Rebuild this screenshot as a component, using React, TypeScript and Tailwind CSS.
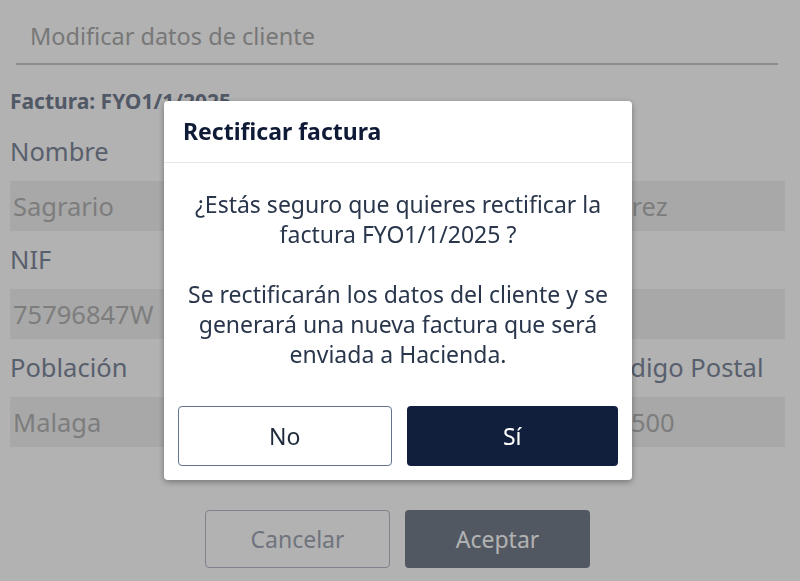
import React from 'react';

const font = "font-['Noto_Sans','Open_Sans',sans-serif]";

function Label({ children }: { children: React.ReactNode }) {
  return <label className="h-8 mb-[14px] text-[25.5px] leading-8 text-[#7f899c] whitespace-nowrap">{children}</label>;
}

function Input({ value }: { value: string }) {
  return (
    <div className="h-[50px] bg-[#f1f1f1] px-[3px] text-[25.5px] leading-[50px] text-[#b4b4b4] whitespace-nowrap overflow-hidden">
      {value}
    </div>
  );
}

function Field({ label, value, span }: { label: string; value: string; span: string }) {
  return (
    <div className={`flex flex-col ${span}`}>
      <Label>{label}</Label>
      <Input value={value} />
    </div>
  );
}

export default function App() {
  return (
    <div className={`relative min-h-screen bg-white ${font}`}>
      {/* Underlying form */}
      <div className="ml-4 mr-[22px] border-b-2 border-[#cbcbcb] pl-[14px] pt-5 pb-[11px] text-[23.5px] leading-8 text-[#acacac]">
        Modificar datos de cliente
      </div>

      <div className="pl-[10px] pr-[15px]">
        <div className="mt-[24px] text-[21px] leading-6 font-bold text-[#747e92]">Factura: FYO1/1/2025</div>

        <div className="mt-[22px] grid grid-cols-4 gap-x-[10px] gap-y-3">
          <Field label="Nombre" value="Sagrario" span="col-span-2" />
          <div className="col-span-2 flex flex-col">
            <Label>Apellidos</Label>
            <div className="grid grid-cols-2 gap-x-[10px]">
              <Input value="García" />
              <Input value="Pérez" />
            </div>
          </div>
          <Field label="NIF" value="75796847W" span="col-span-1" />
          <Field label="Dirección" value="" span="col-span-3" />
          <Field label="Población" value="Malaga" span="col-span-3" />
          <Field label="Código Postal" value="29500" span="col-span-1" />
        </div>

        <div className="mt-[63px] flex justify-center gap-[15px]">
          <button className="h-[58px] w-[185px] rounded-[4px] border border-[#b5bbc7] text-[23px] text-[#a0a7b5]">
            Cancelar
          </button>
          <button className="h-[58px] w-[185px] rounded-[4px] bg-[#757e8d] text-[23px] text-white">
            Aceptar
          </button>
        </div>
      </div>

      {/* Dialog */}
      <div className="fixed inset-0 flex items-center justify-center pr-1 bg-black/30">
        <div className="w-[468px] rounded-[4px] bg-white shadow-[0_2px_6px_rgba(0,0,0,0.35)]">
          <div className="h-[62px] border-b border-[#e5e7eb] px-[19px] flex items-center text-[23px] font-bold text-[#0f1b36]">
            Rectificar factura
          </div>
          <div className="px-[10px] pt-[26px] text-center text-[23px] leading-[30px] text-[#2a364b]">
            <p>
              ¿Estás seguro que quieres rectificar la
              <br />
              factura FYO1/1/2025 ?
            </p>
            <p className="mt-[30px]">
              Se rectificarán los datos del cliente y se
              <br />
              generará una nueva factura que será
              <br />
              enviada a Hacienda.
            </p>
          </div>
          <div className="mt-[37px] flex gap-[15px] px-[14px] pb-[14px]">
            <button className="h-[60px] flex-1 rounded-[4px] border border-[#64748b] text-[23px] text-[#1e293b]">No</button>
            <button className="h-[60px] flex-1 rounded-[4px] bg-[#121f3c] text-[23px] text-white">Sí</button>
          </div>
        </div>
      </div>
    </div>
  );
}
